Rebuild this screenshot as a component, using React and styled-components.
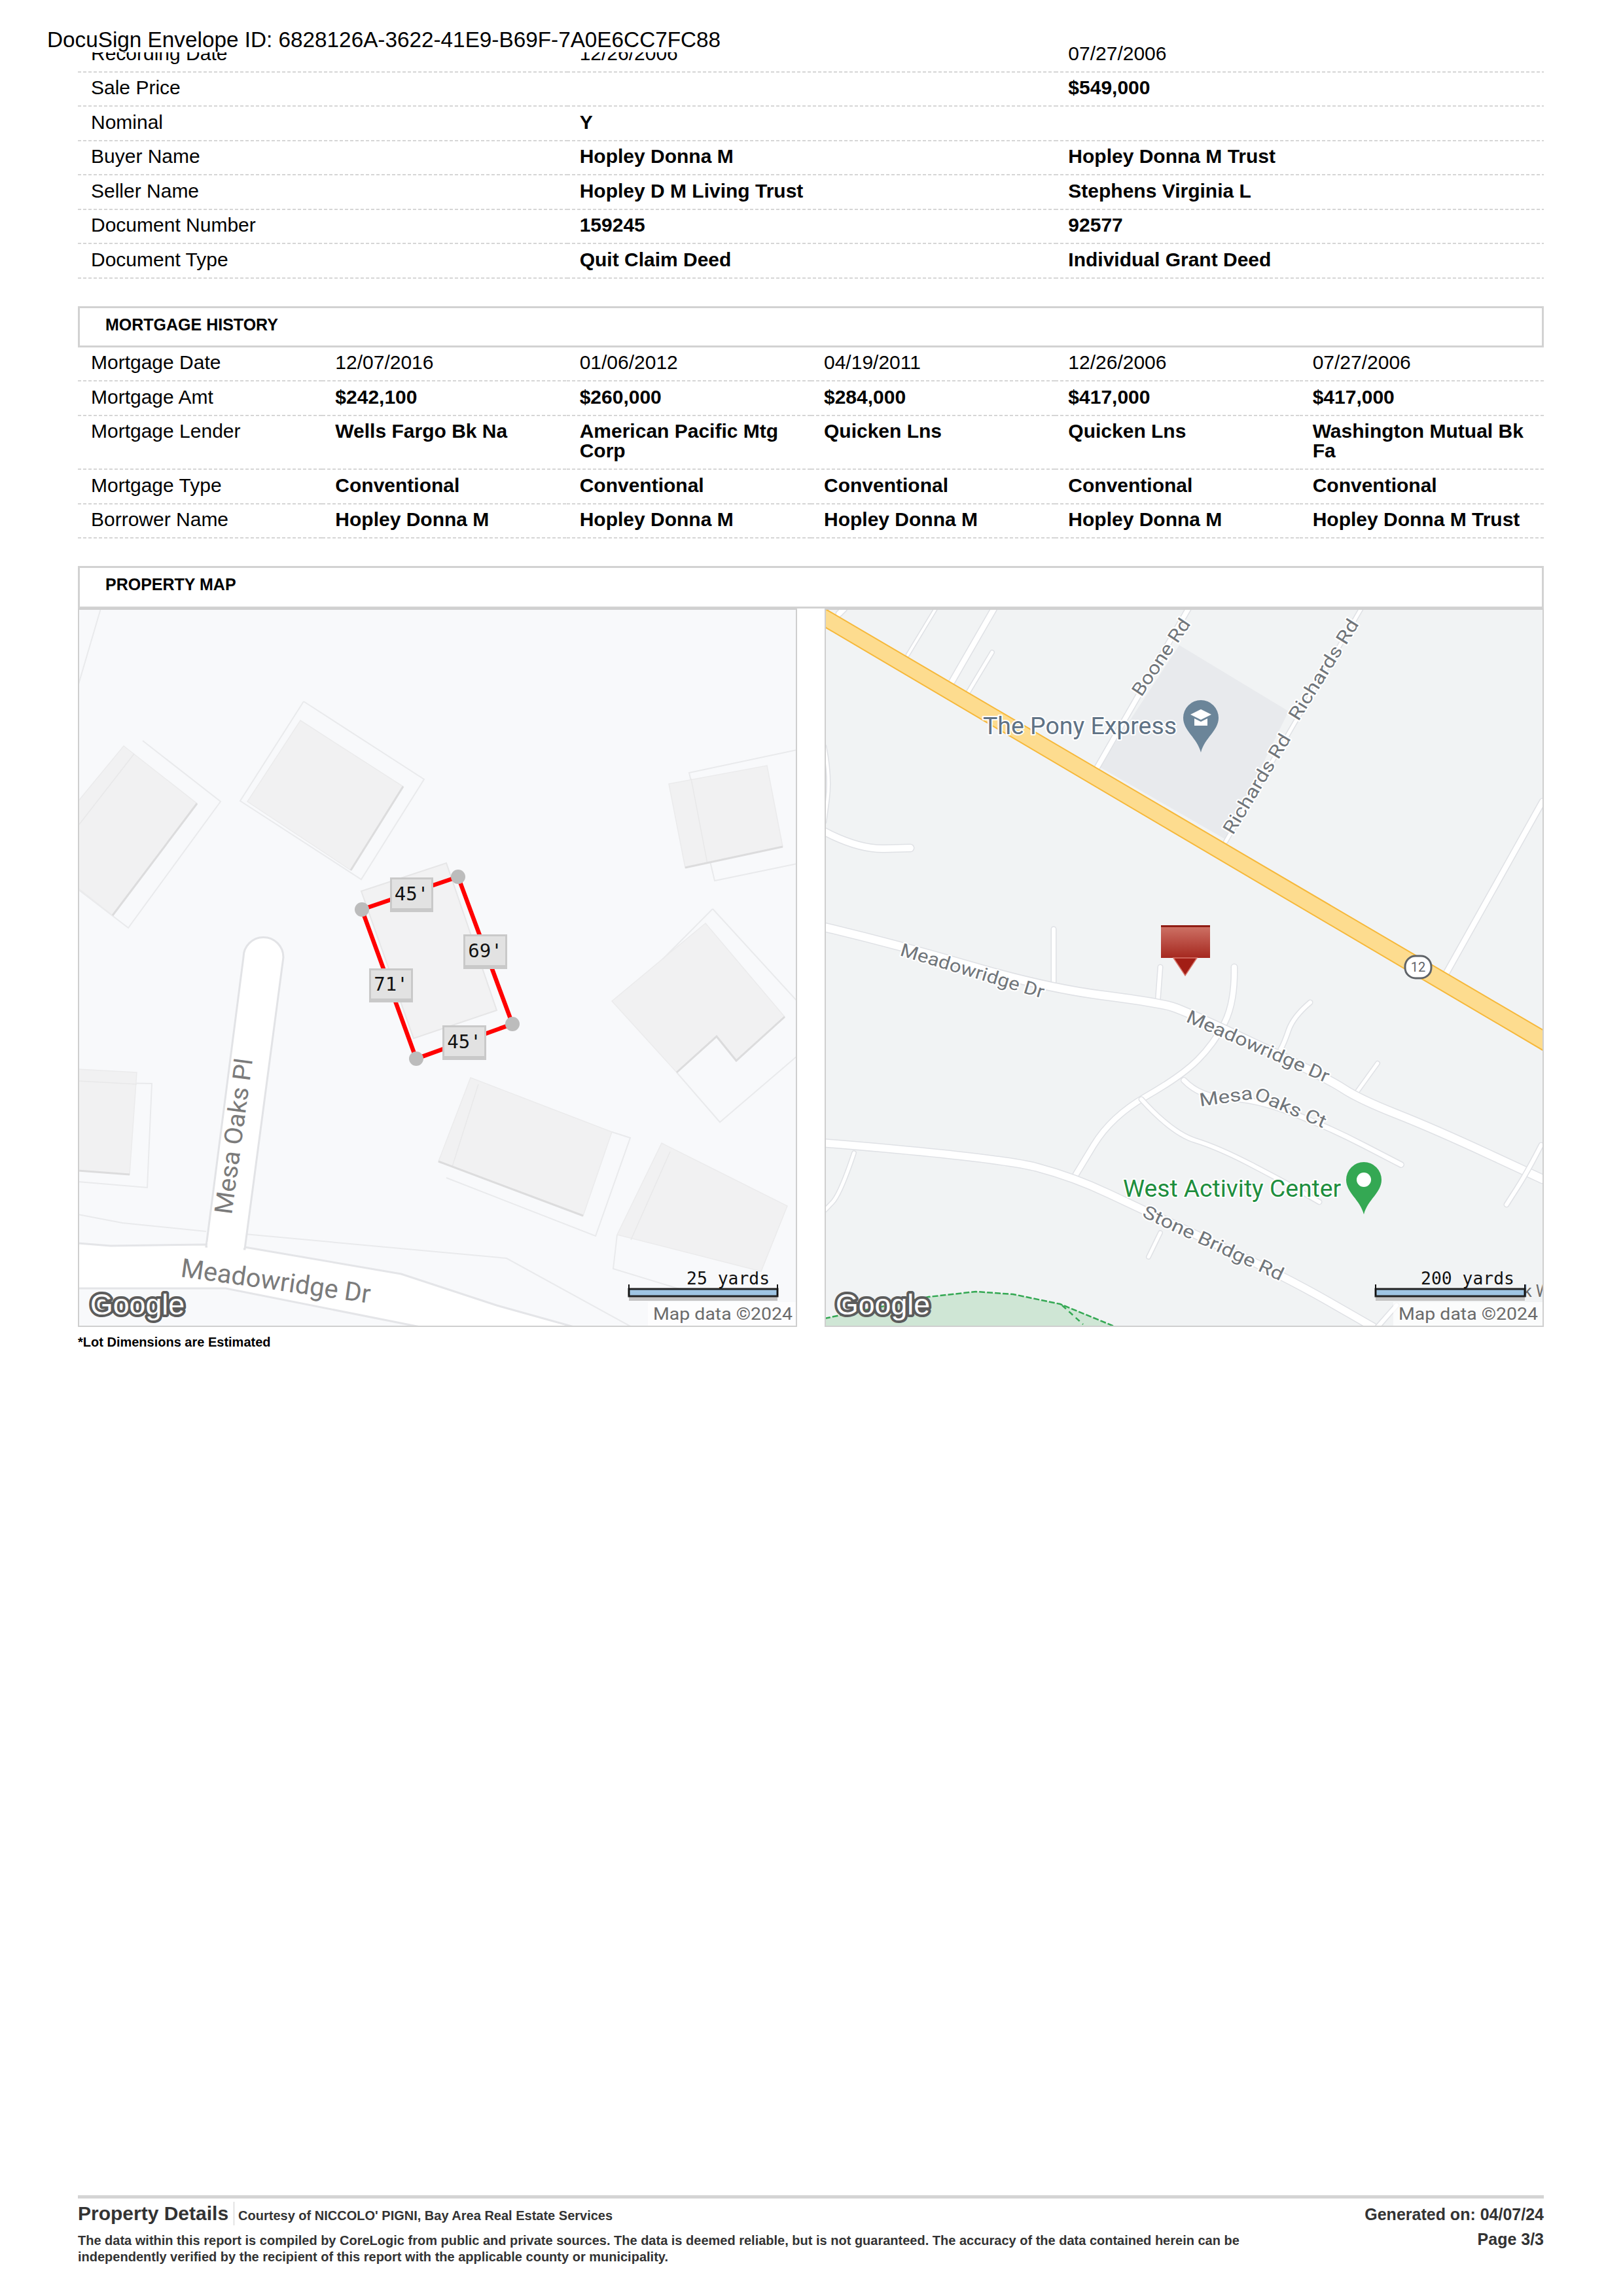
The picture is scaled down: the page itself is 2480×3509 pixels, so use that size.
import React from 'react';
import styled, { createGlobalStyle } from 'styled-components';

const GlobalStyle = createGlobalStyle`
  html, body { margin: 0; padding: 0; background: #fff; }
  body { font-family: "Liberation Sans", Arial, sans-serif; color: #000; }
`;

const Page = styled.div`
  position: relative;
  box-sizing: border-box;
  width: 2480px;
  height: 3509px;
  padding: 58px 121px 47px 119px;
  display: flex;
  flex-direction: column;
  overflow: hidden;
`;

const Stamp = styled.div`
  position: absolute;
  top: 0;
  left: 0;
  width: 1130px;
  height: 80px;
  padding: 41px 0 0 72px;
  box-sizing: border-box;
  background: #fff;
  font-size: 33.3px;
  line-height: 40px;
`;

const Table = styled.div`
  display: grid;
  grid-template-columns: repeat(${p => p.$cols}, 1fr);
`;

const Cell = styled.div`
  box-sizing: border-box;
  padding: 8.5px 10px 14px 20px;
  background: repeating-linear-gradient(90deg, #d6d6d6 0 5px, transparent 5px 8px) left bottom / 100% 2px no-repeat;
  font-size: 30px;
  line-height: 30px;
  font-weight: ${p => (p.$bold ? 700 : 400)};
`;

const SectionHead = styled.div`
  box-sizing: border-box;
  height: ${p => p.$height}px;
  margin-top: 42px;
  padding: 9px 0 0 39px;
  border: 3px solid #d2d2d2;
  font-size: 25px;
  line-height: 32px;
  font-weight: 700;
`;

const MapGrid = styled.div`
  display: grid;
  grid-template-columns: 1fr 1fr;
  gap: 42px;
`;

const MapFrame = styled.div`
  height: 1098px;
  background: ${p => p.$bg};
  outline: 2px solid #cfcfcf;
  outline-offset: -2px;
  svg { display: block; width: 100%; height: 100%; }
`;

const Note = styled.div`
  margin-top: 12px;
  font-size: 20px;
  line-height: 22px;
  font-weight: 700;
`;

const Footer = styled.footer`
  margin-top: auto;
  border-top: 5px solid #d4d4d4;
  display: flex;
  justify-content: space-between;
  color: #333;
  font-weight: 700;
`;

const FooterLeft = styled.div`
  width: 1800px;
  padding-top: 5px;
`;

const FooterTitle = styled.div`
  display: flex;
  align-items: center;
  height: 36px;
`;

const Brand = styled.span`
  font-size: 30px;
  line-height: 36px;
  padding-right: 8px;
  border-right: 1px solid #ccc;
`;

const Courtesy = styled.span`
  font-size: 20px;
  padding: 7px 0 0 6px;
`;

const Disclaimer = styled.p`
  margin: 11px 0 0;
  font-size: 20px;
  line-height: 25px;
`;

const FooterRight = styled.div`
  padding-top: 5px;
  text-align: right;
  font-size: 25px;
  line-height: 38px;
`;

const StreetText = styled.text`
  font-family: Roboto, "Liberation Sans", sans-serif;
  font-size: ${p => p.$size}px;
  fill: ${p => p.$color};
  ${p => p.$halo && 'paint-order: stroke; stroke: #fff; stroke-width: 4px; stroke-linejoin: round;'}
`;

const MonoText = styled.text`
  font-family: "DejaVu Sans Mono", monospace;
  font-size: ${p => p.$size}px;
  fill: #111;
`;

const GoogleText = styled.text`
  font-family: "Liberation Sans", sans-serif;
  font-size: 44px;
  fill: #fff;
  stroke: #5c5c5c;
  stroke-width: 8px;
  paint-order: stroke;
  stroke-linejoin: round;
`;

const AttributionText = styled.text`
  font-family: Roboto, "Liberation Sans", sans-serif;
  font-size: 25px;
  fill: #6b6b6b;
`;

const sale = [
  ['Sale Price', '', '$549,000'],
  ['Nominal', 'Y', ''],
  ['Buyer Name', 'Hopley Donna M', 'Hopley Donna M Trust'],
  ['Seller Name', 'Hopley D M Living Trust', 'Stephens Virginia L'],
  ['Document Number', '159245', '92577'],
  ['Document Type', 'Quit Claim Deed', 'Individual Grant Deed'],
];

const mortgages = [
  ['Mortgage Amt', '$242,100', '$260,000', '$284,000', '$417,000', '$417,000'],
  ['Mortgage Lender', 'Wells Fargo Bk Na', 'American Pacific Mtg Corp', 'Quicken Lns', 'Quicken Lns', 'Washington Mutual Bk Fa'],
  ['Mortgage Type', 'Conventional', 'Conventional', 'Conventional', 'Conventional', 'Conventional'],
  ['Borrower Name', 'Hopley Donna M', 'Hopley Donna M', 'Hopley Donna M', 'Hopley Donna M', 'Hopley Donna M Trust'],
];

const mortgageDates = ['Mortgage Date', '12/07/2016', '01/06/2012', '04/19/2011', '12/26/2006', '07/27/2006'];

const pts = list => list.map(p => p.join(',')).join(' ');

// rounds the corners of a polyline through the midpoints of its segments
const smooth = list => {
  let d = `M${list[0].join(' ')}`;
  for (let i = 1; i < list.length - 1; i++) {
    const mx = (list[i][0] + list[i + 1][0]) / 2;
    const my = (list[i][1] + list[i + 1][1]) / 2;
    d += ` Q${list[i][0]} ${list[i][1]} ${mx} ${my}`;
  }
  const last = list[list.length - 1];
  return `${d} L${last[0]} ${last[1]}`;
};

const Road = ({ points, w }) => (
  <g fill="none" strokeLinecap="round" strokeLinejoin="round">
    <path d={smooth(points)} stroke="#dfe1e5" strokeWidth={w + 3} />
    <path d={smooth(points)} stroke="#fff" strokeWidth={w} />
  </g>
);

const Street = ({ x, y, angle, len, size = 28, color = '#70757a', halo = true, children }) => (
  <StreetText
    $size={size}
    $color={color}
    $halo={halo}
    transform={`translate(${x} ${y}) rotate(${angle})`}
    textLength={len}
    lengthAdjust="spacingAndGlyphs"
  >
    {children}
  </StreetText>
);

const LotLine = ({ points }) => (
  <polyline points={pts(points)} fill="none" stroke="#e9eaec" strokeWidth="2" />
);

// roof with its darker shaded edge and, if any, the fainter face line
const Building = ({ roof, shade, face }) => (
  <g>
    <polygon points={pts(roof)} fill="#f1f1f2" stroke="#ebebec" strokeWidth="1.5" />
    {face && <polyline points={pts(face)} fill="none" stroke="#e8e8e9" strokeWidth="1.5" />}
    {shade && <polyline points={pts(shade)} fill="none" stroke="#dcdcdd" strokeWidth="3" />}
  </g>
);

const DimLabel = ({ x, y, w, h, children }) => (
  <g>
    <rect x={x} y={y} width={w} height={h} fill="#c9c9c9" />
    <rect x={x + 3} y={y + 3} width={w - 6} height={h - 9} fill="#e2e2e2" />
    <MonoText $size={29} x={x + w / 2} y={y + h / 2 + 8} textAnchor="middle">{children}</MonoText>
  </g>
);

const ScaleBar = ({ x, w, label, textX }) => (
  <g>
    <rect x={x} y={1051} width={w} height={7} fill="#c4c4c4" />
    <rect x={x} y={1040} width={w} height={11} fill="#9fc5e3" stroke="#222" strokeWidth="3" />
    <line x1={x} y1={1033} x2={x} y2={1050} stroke="#111" strokeWidth="2" />
    <line x1={x + w} y1={1033} x2={x + w} y2={1050} stroke="#111" strokeWidth="2" />
    <MonoText $size={26.4} x={textX} y={1033}>{label}</MonoText>
  </g>
);

const Attribution = ({ x }) => (
  <g>
    <rect x={x - 8} y={1060} width={1099 - x + 8} height={36} fill="#fff" opacity="0.7" />
    <AttributionText x={x} y={1087} textLength={213} lengthAdjust="spacingAndGlyphs">Map data ©2024</AttributionText>
  </g>
);

const GoogleMark = ({ x }) => (
  <GoogleText x={x} y={1079} textLength={144} lengthAdjust="spacingAndGlyphs">Google</GoogleText>
);

const parcel = [[434, 460], [581, 410], [664, 635], [517, 688]];

const ParcelMap = () => (
  <MapFrame $bg="#f8f9fb">
    <svg viewBox="0 0 1099 1098" xmlns="http://www.w3.org/2000/svg">
      <LotLine points={[[35, 0], [0, 119]]} />
      <LotLine points={[[99, 202], [218, 295], [77, 488], [0, 429]]} />
      <Building
        roof={[[70, 210], [182, 298], [53, 469], [0, 427], [0, 295]]}
        shade={[[182, 298], [53, 469]]}
        face={[[86, 222], [2, 330]]}
      />
      <LotLine points={[[345, 142], [529, 261], [433, 414], [248, 294], [345, 142]]} />
      <Building
        roof={[[340, 171], [497, 272], [417, 400], [259, 295]]}
        shade={[[497, 272], [417, 400]]}
      />
      <LotLine points={[[1099, 216], [934, 251], [973, 416], [1099, 390]]} />
      <Building
        roof={[[903, 268], [1053, 240], [1077, 364], [928, 396]]}
        shade={[[1077, 364], [928, 396]]}
        face={[[937, 260], [962, 390]]}
      />
      <LotLine points={[[970, 459], [1099, 600]]} />
      <LotLine points={[[970, 459], [830, 600]]} />
      <LotLine points={[[1099, 684], [981, 785], [915, 709]]} />
      <Building
        roof={[[959, 481], [1080, 624], [1006, 691], [976, 654], [915, 709], [816, 600]]}
        shade={[[1080, 624], [1006, 691], [976, 654], [915, 709]]}
      />
      <LotLine points={[[0, 724], [113, 726], [106, 885], [0, 876]]} />
      <Building roof={[[0, 704], [90, 709], [79, 865], [0, 859]]} shade={[[79, 865], [0, 859]]} face={[[0, 722], [90, 727]]} />
      <LotLine points={[[816, 800], [844, 809], [791, 959], [563, 870]]} />
      <Building
        roof={[[600, 717], [816, 800], [772, 928], [551, 845]]}
        shade={[[772, 928], [551, 845]]}
        face={[[612, 727], [572, 853]]}
      />
      <LotLine points={[[824, 957], [818, 1009], [926, 1042]]} />
      <Building roof={[[892, 817], [1084, 913], [1044, 1013], [824, 957]]} face={[[905, 830], [845, 965]]} />
      <LotLine points={[[255, 956], [655, 993], [846, 1098]]} />
      <LotLine points={[[0, 926], [68, 939], [196, 952]]} />

      <polygon
        points={pts([[0, 970], [50, 974], [196, 972], [255, 976], [494, 1017], [640, 1065], [758, 1098], [523, 1098], [226, 1039], [0, 1039]])}
        fill="#fff"
        stroke="#e4e5e8"
        strokeWidth="3"
      />
      <path d="M196 975 L253 533 A30.5 30.5 0 0 1 314 533 L255 979 Z" fill="#fff" stroke="#e2e3e6" strokeWidth="3" />
      <rect x="198" y="968" width="55" height="14" fill="#fff" />

      <Street x={235} y={927} angle={-82.3} len={240} size={38} color="#7b7b7b" halo={false}>Mesa Oaks Pl</Street>
      <Street x={156} y={1021} angle={8} len={292} size={40} color="#7b7b7b" halo={false}>Meadowridge Dr</Street>

      <polygon points={pts([[433, 432], [563, 389], [640, 614], [513, 657]])} fill="#f2f2f3" stroke="#e6e6e7" strokeWidth="2" />
      <polygon points={pts(parcel)} fill="none" stroke="#f00" strokeWidth="6.5" />
      {parcel.map(([x, y]) => (
        <circle key={x} cx={x} cy={y} r="11" fill="#bcbcbc" />
      ))}
      <DimLabel x={477} y={411} w={66} h={53}>45'</DimLabel>
      <DimLabel x={589} y={498} w={67} h={53}>69'</DimLabel>
      <DimLabel x={445} y={550} w={67} h={52}>71'</DimLabel>
      <DimLabel x={557} y={637} w={67} h={53}>45'</DimLabel>

      <ScaleBar x={842} w={227} label="25 yards" textX={930} />
      <GoogleMark x={19} />
      <Attribution x={879} />
    </svg>
  </MapFrame>
);

const AreaMap = () => (
  <MapFrame $bg="#f1f3f4">
    <svg viewBox="0 0 1099 1098" xmlns="http://www.w3.org/2000/svg">
      <polygon points={pts([[542, 56], [709, 157], [613, 353], [420, 242]])} fill="#e8eaed" />

      <polygon
        points={pts([[0, 1085], [159, 1052], [231, 1044], [288, 1048], [360, 1063], [445, 1098], [0, 1098]])}
        fill="#cfe6d5"
      />
      <polyline
        points={pts([[0, 1085], [159, 1052], [231, 1044], [288, 1048], [360, 1063], [445, 1098]])}
        fill="none"
        stroke="#34a853"
        strokeWidth="2.5"
        strokeDasharray="9 3"
      />
      <line x1="363" y1="1065" x2="395" y2="1094" stroke="#34a853" strokeWidth="2.5" strokeDasharray="8 6" />

      <Road w={8} points={[[259, 0], [195, 111]]} />
      <Road w={4} points={[[170, 0], [127, 71]]} />
      <Road w={5} points={[[256, 67], [220, 127]]} />
      <Road w={8} points={[[30, 0], [22, 8]]} />
      <Road w={4} points={[[0, 211], [9, 257], [0, 326]]} />
      <Road w={10} points={[[0, 341], [52, 368], [131, 366]]} />
      <Road w={7} points={[[556, 0], [417, 242]]} />
      <Road w={5} points={[[820, 0], [613, 356]]} />
      <Road w={8} points={[[1097, 295], [949, 559]]} />
      <Road w={6} points={[[350, 490], [350, 575]]} />
      <Road w={6} points={[[513, 548], [509, 602]]} />
      <Road w={8} points={[[626, 548], [627, 602], [595, 665], [545, 715], [438, 776], [384, 865]]} />
      <Road w={6} points={[[742, 602], [716, 624], [702, 665], [692, 682]]} />
      <Road w={5} points={[[845, 695], [809, 745]]} />
      <Road w={6} points={[[484, 750], [531, 802], [602, 824], [702, 876], [756, 907]]} />
      <Road w={7} points={[[549, 721], [574, 747], [659, 750], [767, 791], [881, 850]]} />
      <Road w={12} points={[[0, 487], [109, 513], [338, 580], [509, 602], [552, 615], [767, 717], [817, 750], [931, 795], [1097, 872]]} />
      <Road w={11} points={[[0, 817], [267, 839], [381, 869], [488, 920], [702, 1020], [838, 1098]]} />
      <Road w={5} points={[[45, 832], [24, 895], [0, 920]]} />
      <Road w={5} points={[[513, 954], [495, 991]]} />
      <Road w={6} points={[[1095, 820], [1074, 861], [1042, 911]]} />
      <Road w={6} points={[[874, 1065], [845, 1098]]} />

      <polygon
        points={pts([[0, 0], [1099, 645], [1099, 676], [0, 28]])}
        fill="#fddc8f"
        stroke="#f6b83a"
        strokeWidth="2"
      />

      <g transform="translate(907 548)">
        <rect x="-20" y="-17" width="40" height="34" rx="16" fill="#fff" stroke="#5f6368" strokeWidth="3" />
        <StreetText $size={20} $color="#5f6368" x="0" y="7" textAnchor="middle">12</StreetText>
      </g>

      <Street x={484} y={136} angle={-56} len={136}>Boone Rd</Street>
      <Street x={724} y={173} angle={-58} len={176}>Richards Rd</Street>
      <Street x={624} y={347} angle={-59} len={173}>Richards Rd</Street>
      <Street x={114} y={530} angle={16.8} len={228}>Meadowridge Dr</Street>
      <Street x={551} y={631} angle={23.6} len={235}>Meadowridge Dr</Street>
      <Street x={574} y={761} angle={-8} len={82}>Mesa</Street>
      <Street x={655} y={749} angle={23} len={116}>Oaks Ct</Street>
      <Street x={484} y={929} angle={25} len={234}>Stone Bridge Rd</Street>
      <Street x={242} y={192} angle={0} len={296} size={36} color="#5f7285">The Pony Express</Street>
      <Street x={456} y={899} angle={0} len={333} size={36} color="#1e8e3e">West Activity Center</Street>

      <g transform="translate(1 1)">
        <path d="M574 219 C568 196 547 186 547 166 A27 27 0 0 1 601 166 C601 186 580 196 574 219 Z" fill="#6b8599" />
        <path d="M574 153 L590 161 L574 169 L558 161 Z M564 167 L574 172 L584 167 L584 178 L564 178 Z" fill="#fff" />
      </g>

      <g transform="translate(2 4)">
        <path d="M822 922 C816 899 795 889 795 869 A27 27 0 0 1 849 869 C849 889 828 899 822 922 Z" fill="#34a853" />
        <circle cx="822" cy="869" r="11" fill="#fff" />
      </g>

      <defs>
        <linearGradient id="markerFill" x1="0" y1="0" x2="0" y2="1">
          <stop offset="0" stopColor="#cf7468" />
          <stop offset="1" stopColor="#a5281f" />
        </linearGradient>
      </defs>
      <rect x="514" y="484" width="75" height="50" fill="url(#markerFill)" />
      <rect x="514" y="484" width="75" height="3" fill="#8f1c14" />
      <polygon points="533,534 569,534 551,561" fill="#a21d15" stroke="#d9776c" strokeWidth="1.5" />

      <AttributionText x={1068} y={1052} fill="#888">k W</AttributionText>
      <ScaleBar x={842} w={228} label="200 yards" textX={911} />
      <GoogleMark x={17} />
      <Attribution x={877} />
    </svg>
  </MapFrame>
);

const App = () => (
  <Page>
    <GlobalStyle />
    <Table $cols={3}>
      <Cell>Recording Date</Cell>
      <Cell>12/26/2006</Cell>
      <Cell>07/27/2006</Cell>
      {sale.flatMap((row, i) =>
        row.map((text, j) => (
          <Cell key={`${i}-${j}`} $bold={j > 0}>{text}</Cell>
        ))
      )}
    </Table>

    <SectionHead $height={63}>MORTGAGE HISTORY</SectionHead>
    <Table $cols={6}>
      {mortgageDates.map(text => (
        <Cell key={text}>{text}</Cell>
      ))}
      {mortgages.flatMap((row, i) =>
        row.map((text, j) => (
          <Cell key={`${i}-${j}`} $bold={j > 0}>{text}</Cell>
        ))
      )}
    </Table>

    <SectionHead $height={65}>PROPERTY MAP</SectionHead>
    <MapGrid>
      <ParcelMap />
      <AreaMap />
    </MapGrid>
    <Note>*Lot Dimensions are Estimated</Note>

    <Footer>
      <FooterLeft>
        <FooterTitle>
          <Brand>Property Details</Brand>
          <Courtesy>Courtesy of NICCOLO' PIGNI, Bay Area Real Estate Services</Courtesy>
        </FooterTitle>
        <Disclaimer>
          The data within this report is compiled by CoreLogic from public and private sources. The data is deemed reliable, but is not guaranteed. The accuracy of the data contained herein can be independently verified by the recipient of this report with the applicable county or municipality.
        </Disclaimer>
      </FooterLeft>
      <FooterRight>
        <div>Generated on: 04/07/24</div>
        <div>Page 3/3</div>
      </FooterRight>
    </Footer>

    <Stamp>DocuSign Envelope ID: 6828126A-3622-41E9-B69F-7A0E6CC7FC88</Stamp>
  </Page>
);

export default App;
